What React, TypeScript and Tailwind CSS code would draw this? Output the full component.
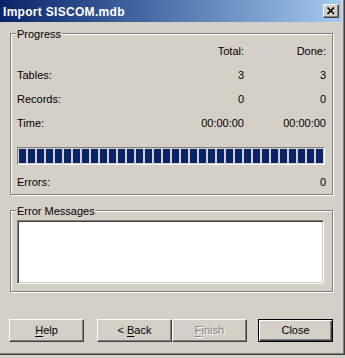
import React from 'react'

function Group({ label, className, children }: { label: string; className?: string; children: React.ReactNode }) {
  return (
    <div className={`relative border border-[#808080] shadow-[inset_1px_1px_0_#fff,1px_1px_0_#fff] ${className ?? ''}`}>
      <span className="absolute -top-[6px] left-[5px] bg-[#d4d0c8] px-[1px] leading-[13px]">{label}</span>
      {children}
    </div>
  )
}

function Btn({ children, isDefault, disabled, className }: { children: React.ReactNode; isDefault?: boolean; disabled?: boolean; className?: string }) {
  const frame = isDefault
    ? 'border border-black shadow-[inset_1px_1px_0_#fff,inset_-1px_-1px_0_#404040,inset_-2px_-2px_0_#808080]'
    : 'border border-t-white border-l-white border-r-[#404040] border-b-[#404040] shadow-[inset_-1px_-1px_0_#808080]'
  return (
    <button
      disabled={disabled}
      className={`w-[75px] h-[23px] bg-[#d4d0c8] flex items-center justify-center leading-[13px] ${frame} ${
        disabled ? 'text-[#808080] [text-shadow:1px_1px_0_#fff]' : 'text-black'
      } ${className ?? ''}`}
    >
      {children}
    </button>
  )
}

export default function App() {
  const rows = [
    ['Tables:', '3', '3'],
    ['Records:', '0', '0'],
    ['Time:', '00:00:00', '00:00:00'],
  ]

  return (
    <div className="w-[345px] h-[358px] bg-[#d4d0c8] overflow-hidden text-[11px] text-black font-['Liberation_Sans',Arial,sans-serif]">
      <div className="w-[345px] h-[355px] border-r border-b border-[#404040]">
        <div className="h-full border-r border-b border-[#808080] pr-[2px] flex flex-col">
          {/* title bar */}
          <div className="h-[22px] flex items-center justify-between pl-[3px] pr-[2px] bg-gradient-to-r from-[#0a246a] to-[#a6caf0]">
            <span className="text-white text-[12px] font-bold tracking-[0.3px] leading-[14px] mt-[1px]">Import SISCOM.mdb</span>
            <div className="w-[16px] h-[14px] bg-[#d4d0c8] border border-t-white border-l-white border-r-[#404040] border-b-[#404040] shadow-[inset_-1px_-1px_0_#808080] flex items-center justify-center">
              <svg width="14" height="12" viewBox="0 0 14 12">
                <path d="M3.5 2.5 L10 9 M10 2.5 L3.5 9" stroke="#000" strokeWidth="1.7" fill="none" />
              </svg>
            </div>
          </div>

          <div className="pl-[10px] flex flex-col">
            <Group label="Progress" className="mt-[11px] w-[323px] pt-[11px] pl-[6px] pr-[6px] pb-[5px]">
              <div className="grid grid-cols-[1fr_82px_82px] gap-y-[11px] leading-[13px]">
                <span />
                <span className="text-right">Total:</span>
                <span className="text-right">Done:</span>
                {rows.map((r) => (
                  <React.Fragment key={r[0]}>
                    <span>{r[0]}</span>
                    <span className="text-right">{r[1]}</span>
                    <span className="text-right">{r[2]}</span>
                  </React.Fragment>
                ))}
              </div>
              <div className="mt-[17px] mr-[1px] h-[18px] border border-t-[#808080] border-l-[#808080] border-r-white border-b-white p-[1px] bg-[#d4d0c8]">
                <div className="h-full flex gap-[2px] overflow-hidden">
                  {Array.from({ length: 34 }).map((_, i) => (
                    <div key={i} className="w-[7px] h-full shrink-0 bg-[#0a246a]" />
                  ))}
                </div>
              </div>
              <div className="mt-[11px] flex justify-between leading-[13px]">
                <span>Errors:</span>
                <span>0</span>
              </div>
            </Group>

            <Group label="Error Messages" className="mt-[15px] w-[323px] pt-[9px] pl-[6px] pb-[7px]">
              <div className="w-[307px] h-[64px] bg-white border border-t-[#808080] border-l-[#808080] border-r-white border-b-white shadow-[inset_1px_1px_0_#404040,inset_-1px_-1px_0_#d4d0c8]" />
            </Group>

            <div className="mt-[27px] -ml-[1px] flex">
              <Btn>
                <span className="underline underline-offset-[2px]">H</span>elp
              </Btn>
              <Btn className="ml-[13px]">
                &lt; <span className="underline underline-offset-[2px] ml-[3px]">B</span>ack
              </Btn>
              <Btn disabled>
                <span className="underline underline-offset-[2px]">F</span>inish
              </Btn>
              <Btn isDefault className="ml-[11px]">
                Close
              </Btn>
            </div>
          </div>
        </div>
      </div>
    </div>
  )
}
